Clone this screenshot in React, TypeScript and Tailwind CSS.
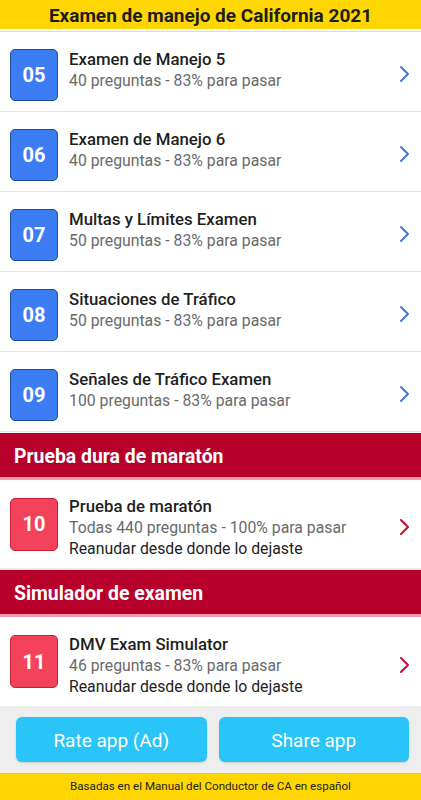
import React from "react";

const font = { fontFamily: "Roboto, 'Noto Sans', sans-serif" };

function Chevron({ color }: { color: string }) {
  return (
    <svg width="12" height="18" viewBox="0 0 12 18" className="shrink-0">
      <polyline points="3,2 10,9 3,16" fill="none" stroke={color} strokeWidth="2" strokeLinecap="round" strokeLinejoin="round" />
    </svg>
  );
}

type Item = { n: string; title: string; sub: string; extra?: string };

const blueItems: Item[] = [
  { n: "05", title: "Examen de Manejo 5", sub: "40 preguntas - 83% para pasar" },
  { n: "06", title: "Examen de Manejo 6", sub: "40 preguntas - 83% para pasar" },
  { n: "07", title: "Multas y Límites Examen", sub: "50 preguntas - 83% para pasar" },
  { n: "08", title: "Situaciones de Tráfico", sub: "50 preguntas - 83% para pasar" },
  { n: "09", title: "Señales de Tráfico Examen", sub: "100 preguntas - 83% para pasar" },
];

function BlueRow({ item }: { item: Item }) {
  return (
    <div className="h-[80px] flex items-center border-b border-[#e3e3e3] bg-white pl-[10px] pr-[11px] shrink-0">
      <div className="w-[48px] h-[52px] rounded-[5px] bg-[#3c7df4] border border-[#1f4c9e] flex items-center justify-center text-white text-[20px] font-bold mt-[6px]">
        {item.n}
      </div>
      <div className="flex-1 ml-[11px] flex flex-col -mt-[3px]">
        <div className="text-[16.8px] font-medium text-[#1f1f1f] leading-[22px]">{item.title}</div>
        <div className="text-[15.8px] text-[#6a6a6a] leading-[22px]">{item.sub}</div>
      </div>
      <div className="mt-[4px]">
        <Chevron color="#3a78d0" />
      </div>
    </div>
  );
}

function RedRow({ item, h }: { item: Item; h: string }) {
  return (
    <div className={`${h} flex items-center bg-white pl-[10px] pr-[11px] shrink-0`}>
      <div className="w-[48px] h-[53px] rounded-[5px] bg-[#f3435b] border border-[#c72038] flex items-center justify-center text-white text-[20px] font-bold">
        {item.n}
      </div>
      <div className="flex-1 ml-[11px] flex flex-col mt-[7px]">
        <div className="text-[16.8px] font-medium text-[#1f1f1f] leading-[22px]">{item.title}</div>
        <div className="text-[15.8px] text-[#6a6a6a] leading-[21px]">{item.sub}</div>
        <div className="text-[15.8px] text-[#222] leading-[22px]">{item.extra}</div>
      </div>
      <div className="mt-[6px]">
        <Chevron color="#c8102e" />
      </div>
    </div>
  );
}

function Section({ title }: { title: string }) {
  return (
    <div className="h-[47px] bg-[#b6002b] border-b-[3px] border-[#f39aaa] flex items-center pl-[14px] shrink-0">
      <span className="text-white text-[19.4px] font-bold mt-[4px]">{title}</span>
    </div>
  );
}

export default function App() {
  return (
    <div style={font} className="w-[421px] h-[800px] flex flex-col bg-white overflow-hidden">
      <div className="h-[32px] bg-white shrink-0 flex flex-col">
        <div className="h-[29px] bg-[#ffd600] flex items-center justify-center">
          <span className="text-[19px] font-bold text-[#1d1d1d] mt-[3px] whitespace-nowrap">Examen de manejo de California 2021</span>
        </div>
        <div className="h-[3px] bg-white border-b border-[#dcdcdc]" />
      </div>
      {blueItems.map((it) => (
        <BlueRow key={it.n} item={it} />
      ))}
      <div className="h-px bg-white shrink-0" />
      <Section title="Prueba dura de maratón" />
      <div className="h-[90px] flex flex-col shrink-0">
        <RedRow
          h="h-[88px]"
          item={{ n: "10", title: "Prueba de maratón", sub: "Todas 440 preguntas - 100% para pasar", extra: "Reanudar desde donde lo dejaste" }}
        />
        <div className="h-[2px] bg-[#fbe9ec]" />
      </div>
      <Section title="Simulador de examen" />
      <RedRow
        h="h-[89px]"
        item={{ n: "11", title: "DMV Exam Simulator", sub: "46 preguntas - 83% para pasar", extra: "Reanudar desde donde lo dejaste" }}
      />
      <div className="h-[67px] bg-[#eeeeee] flex items-center pl-[16px] pr-[12px] gap-[12px] shrink-0">
        <button className="flex-1 h-[45px] rounded-[6px] bg-[#29c4f8] text-white text-[19px] flex items-center justify-center pt-[3px] shadow-[0_1px_2px_rgba(0,0,0,0.15)]">
          Rate app (Ad)
        </button>
        <button className="flex-1 h-[45px] rounded-[6px] bg-[#29c4f8] text-white text-[19px] flex items-center justify-center pt-[3px] shadow-[0_1px_2px_rgba(0,0,0,0.15)]">
          Share app
        </button>
      </div>
      <div className="flex-1 bg-[#ffd600] border-t border-[#d8c36a] flex items-center justify-center">
        <span className="text-[11.6px] text-[#222]">Basadas en el Manual del Conductor de CA en español</span>
      </div>
    </div>
  );
}
